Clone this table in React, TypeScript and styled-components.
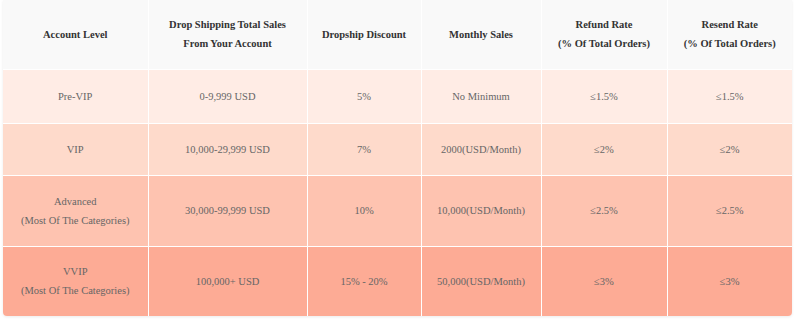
import styled, { createGlobalStyle } from 'styled-components';

const GlobalStyle = createGlobalStyle`
  html, body {
    margin: 0;
    padding: 0;
    background: #fff;
  }
  body, table, th, td {
    font-family: "Liberation Serif", "Times New Roman", serif;
  }
`;

const Page = styled.div`
  width: 800px;
  height: 325px;
  padding: 0 8px 0 3px;
  box-sizing: border-box;
`;

const Card = styled.div`
  width: 789px;
  border-radius: 0 0 4px 4px;
  overflow: hidden;
  box-shadow: 0 1px 3px rgba(0, 0, 0, 0.08);
`;

const Table = styled.table`
  width: 100%;
  border-collapse: collapse;
  table-layout: fixed;
  font-family: "Liberation Serif", "Times New Roman", serif;
`;

const HeadCell = styled.th`
  background: #f9f9f9;
  color: #333;
  font-family: "Liberation Serif", "Times New Roman", serif;
  font-weight: bold;
  font-size: 10.5px;
  line-height: 19px;
  text-align: center;
  vertical-align: middle;
  height: 69px;
  padding: 0 6px;
  border-right: 1px solid #fff;
  box-sizing: border-box;
  &:last-child {
    border-right: none;
  }
`;

const Row = styled.tr<{ $bg: string; $h: number }>`
  background: ${(p) => p.$bg};
  height: ${(p) => p.$h}px;
  border-top: 1px solid #fff;
`;

const Cell = styled.td`
  color: #666;
  font-family: "Liberation Serif", "Times New Roman", serif;
  font-size: 10.5px;
  line-height: 19px;
  text-align: center;
  vertical-align: middle;
  padding: 0 6px;
  border-right: 1px solid #fff;
  &:last-child {
    border-right: none;
  }
`;

const widths = [145, 159, 114, 120, 126, 125];

const headers = [
  ['Account Level'],
  ['Drop Shipping Total Sales', 'From Your Account'],
  ['Dropship Discount'],
  ['Monthly Sales'],
  ['Refund Rate', '(% Of Total Orders)'],
  ['Resend Rate', '(% Of Total Orders)'],
];

type Level = {
  name: string[];
  sales: string;
  discount: string;
  monthly: string;
  refund: string;
  resend: string;
  bg: string;
  h: number;
};

const levels: Level[] = [
  { name: ['Pre-VIP'], sales: '0-9,999 USD', discount: '5%', monthly: 'No Minimum', refund: '≤1.5%', resend: '≤1.5%', bg: '#ffece5', h: 54 },
  { name: ['VIP'], sales: '10,000-29,999 USD', discount: '7%', monthly: '2000(USD/Month)', refund: '≤2%', resend: '≤2%', bg: '#fedacb', h: 52 },
  { name: ['Advanced', '(Most Of The Categories)'], sales: '30,000-99,999 USD', discount: '10%', monthly: '10,000(USD/Month)', refund: '≤2.5%', resend: '≤2.5%', bg: '#fec3b0', h: 71 },
  { name: ['VVIP', '(Most Of The Categories)'], sales: '100,000+ USD', discount: '15% - 20%', monthly: '50,000(USD/Month)', refund: '≤3%', resend: '≤3%', bg: '#fdab95', h: 70 },
];

function Lines({ lines }: { lines: string[] }) {
  return (
    <>
      {lines.map((l, i) => (
        <span key={i}>
          {i > 0 && <br />}
          {l}
        </span>
      ))}
    </>
  );
}

export default function App() {
  return (
    <Page>
      <GlobalStyle />
      <Card>
        <Table>
          <colgroup>
            {widths.map((w, i) => (
              <col key={i} style={{ width: w }} />
            ))}
          </colgroup>
          <thead>
            <tr>
              {headers.map((h, i) => (
                <HeadCell key={i}>
                  <Lines lines={h} />
                </HeadCell>
              ))}
            </tr>
          </thead>
          <tbody>
            {levels.map((lv) => (
              <Row key={lv.name[0]} $bg={lv.bg} $h={lv.h}>
                <Cell>
                  <Lines lines={lv.name} />
                </Cell>
                <Cell>{lv.sales}</Cell>
                <Cell>{lv.discount}</Cell>
                <Cell>{lv.monthly}</Cell>
                <Cell>{lv.refund}</Cell>
                <Cell>{lv.resend}</Cell>
              </Row>
            ))}
          </tbody>
        </Table>
      </Card>
    </Page>
  );
}
